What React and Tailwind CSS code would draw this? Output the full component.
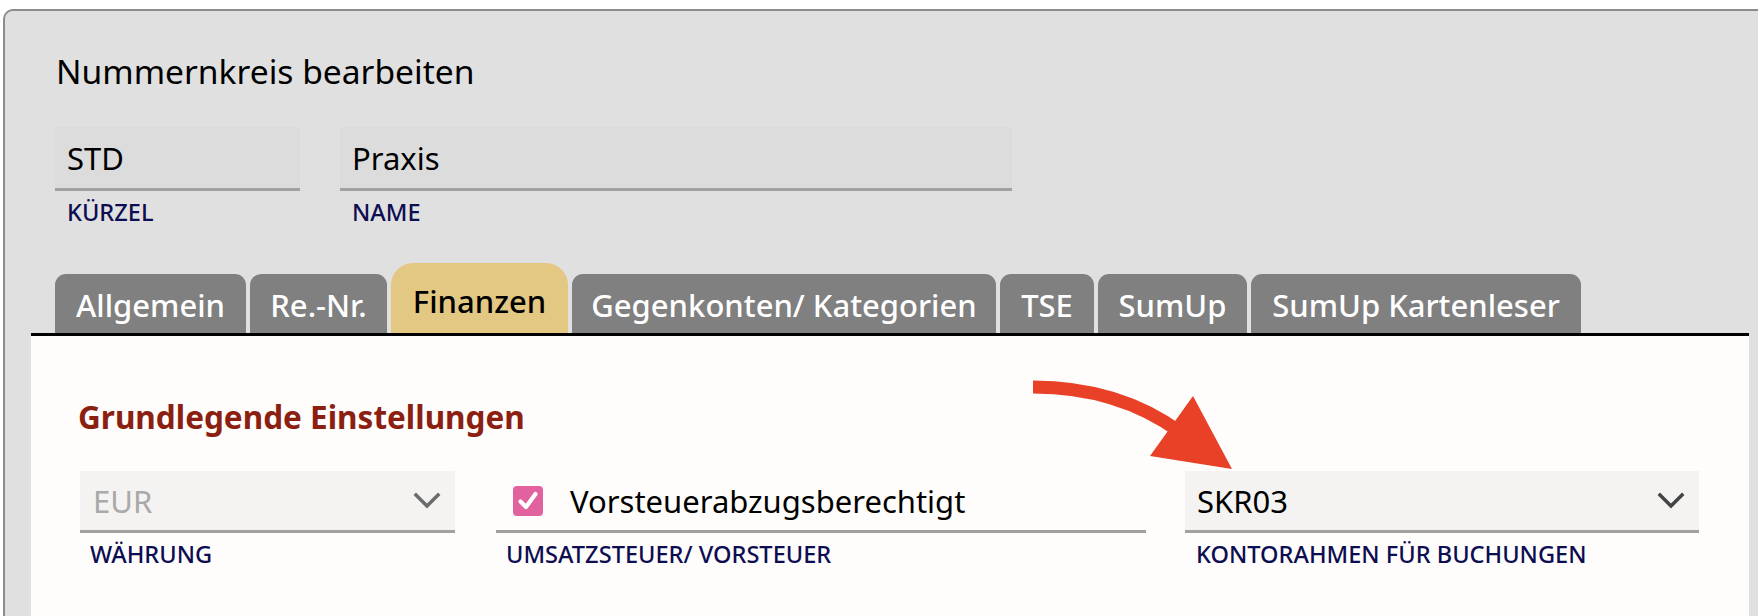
import React from "react";

function TopField({ w, value, label }) {
  return (
    <div className="flex flex-col" style={{ width: w }}>
      <div className="h-[64px] bg-[#dcdcdc] border-b-[3px] border-[#a0a0a0] pl-[12px] flex items-center text-[31px] leading-[40px] text-black">
        {value}
      </div>
      <div className="mt-[7px] pl-[12px] text-[23.6px] leading-[28px] font-medium text-[#0d0d52]">{label}</div>
    </div>
  );
}

function Chevron({ color }) {
  return (
    <svg width="28" height="18" viewBox="0 0 28 18" fill="none">
      <path d="M3 3 L14 14 L25 3" stroke={color} strokeWidth="3.5" strokeLinecap="square" />
    </svg>
  );
}

const tabs = [
  { t: "Allgemein", w: 191 },
  { t: "Re.-Nr.", w: 137 },
  { t: "Finanzen", w: 177, active: true },
  { t: "Gegenkonten/ Kategorien", w: 424 },
  { t: "TSE", w: 94 },
  { t: "SumUp", w: 149 },
  { t: "SumUp Kartenleser", w: 330 },
];

export default function App() {
  return (
    <div className="relative w-[1758px] h-[616px] bg-white overflow-hidden flex font-['Noto_Sans',sans-serif]">
      <div className="ml-[3px] mt-[9px] flex-1 bg-[#e0e0e0] border-l-2 border-t-2 border-[#8c8c8c] rounded-tl-[10px] flex flex-col">
        <h1 className="ml-[51px] mt-[40px] text-[33.6px] leading-[40px] text-black">Nummernkreis bearbeiten</h1>
        <div className="ml-[50px] mt-[36px] flex gap-[40px]">
          <TopField w={245} value="STD" label="KÜRZEL" />
          <TopField w={672} value="Praxis" label="NAME" />
        </div>
        <div className="ml-[50px] mt-[37px] flex items-end gap-[4px]">
          {tabs.map((tab) =>
            tab.active ? (
              <div
                key={tab.t}
                className="h-[70px] bg-[#e2c883] rounded-t-[22px] pt-[20px] flex justify-center text-[31px] leading-[36px] font-medium text-black"
                style={{ width: tab.w }}
              >
                {tab.t}
              </div>
            ) : (
              <div
                key={tab.t}
                className="h-[59px] bg-[#808080] rounded-t-[11px] pt-[13px] flex justify-center text-[31px] leading-[36px] font-medium text-white"
                style={{ width: tab.w }}
              >
                {tab.t}
              </div>
            )
          )}
        </div>
        <div className="ml-[26px] mr-[9px] flex-1 bg-[#fefdfb] border-t-[3px] border-black">
          <h2 className="ml-[47px] mt-[61px] text-[31.5px] leading-[40px] font-bold text-[#8b1f12]">Grundlegende Einstellungen</h2>
          <div className="ml-[49px] mt-[34px] flex">
            <div className="w-[375px] flex flex-col">
              <div className="h-[62px] bg-[#f4f3f1] border-b-[3px] border-[#a0a0a0] pl-[13px] pr-[14px] flex items-center justify-between">
                <span className="text-[31px] leading-[40px] text-[#a9a9a9]">EUR</span>
                <Chevron color="#6b6b6b" />
              </div>
              <div className="mt-[7px] pl-[10px] text-[23.6px] leading-[28px] font-medium text-[#0d0d52]">WÄHRUNG</div>
            </div>
            <div className="ml-[41px] w-[650px] flex flex-col">
              <div className="h-[62px] border-b-[3px] border-[#a0a0a0] pl-[17px] flex items-center">
                <div className="w-[30px] h-[30px] rounded-[4px] bg-[#e2619f] flex items-center justify-center">
                  <svg width="24" height="24" viewBox="0 0 24 24" fill="none">
                    <path d="M4.5 12.5 L10 18 L19.5 5" stroke="white" strokeWidth="4.2" strokeLinecap="round" strokeLinejoin="round" />
                  </svg>
                </div>
                <span className="ml-[27px] text-[31px] leading-[40px] text-black">Vorsteuerabzugsberechtigt</span>
              </div>
              <div className="mt-[7px] pl-[10px] text-[23.6px] leading-[28px] font-medium text-[#0d0d52]">UMSATZSTEUER/ VORSTEUER</div>
            </div>
            <div className="ml-[39px] w-[514px] flex flex-col">
              <div className="h-[62px] bg-[#f4f3f1] border-b-[3px] border-[#a0a0a0] pl-[12px] pr-[14px] flex items-center justify-between">
                <span className="text-[31px] leading-[40px] text-black">SKR03</span>
                <Chevron color="#444444" />
              </div>
              <div className="mt-[7px] pl-[11px] text-[23.6px] leading-[28px] font-medium text-[#0d0d52]">KONTORAHMEN FÜR BUCHUNGEN</div>
            </div>
          </div>
        </div>
      </div>
      <svg className="absolute left-0 top-0 pointer-events-none" width="1758" height="616" viewBox="0 0 1758 616">
        <path d="M1033 387 Q1118 387 1180 432" stroke="#e84127" strokeWidth="13" fill="none" />
        <polygon points="1150,456 1193,396 1232,469" fill="#e84127" />
      </svg>
    </div>
  );
}
